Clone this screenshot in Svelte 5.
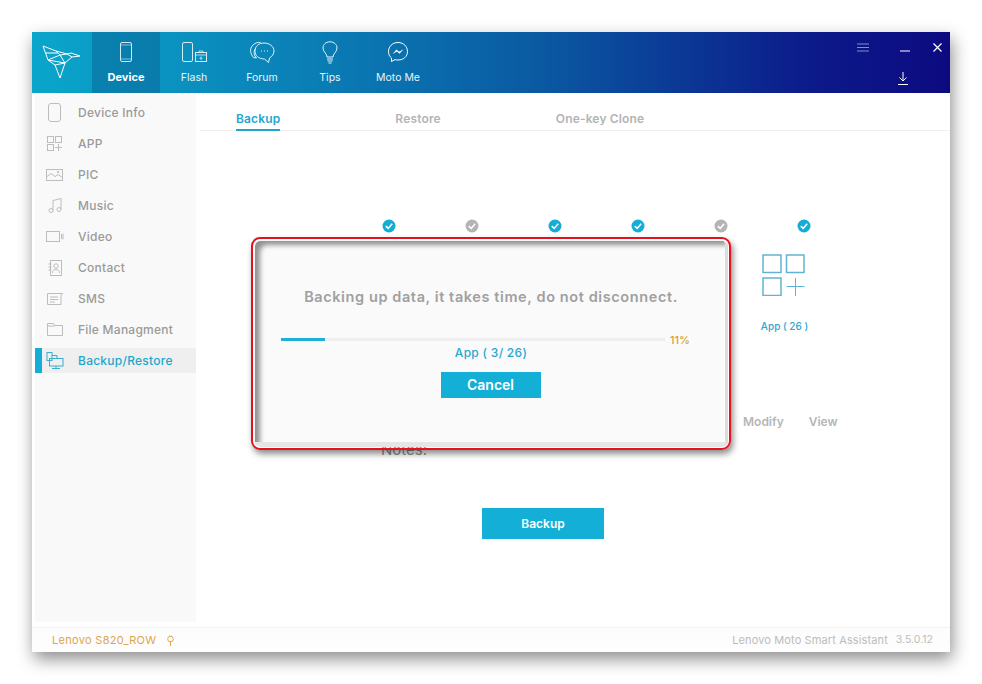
<script lang="ts">
	const nav = [
		{ label: 'Device', active: true },
		{ label: 'Flash' },
		{ label: 'Forum' },
		{ label: 'Tips' },
		{ label: 'Moto Me' }
	];
	const side = ['Device Info', 'APP', 'PIC', 'Music', 'Video', 'Contact', 'SMS', 'File Managment', 'Backup/Restore'];
	const tabs = ['Backup', 'Restore', 'One-key Clone'];
	const steps = [true, false, true, true, false, true];
	const percent = 11;
</script>

<div class="window">
	<header class="topbar">
		<div class="logo">
			<svg width="60" height="61" viewBox="-4 -4 60 61" fill="none" stroke="#fff" stroke-width="1" stroke-linejoin="round">
				<path d="M7 10L20 15L31 18L35 17L44 20L36 21L29 27L24 42L19 29L29 27M7 10L12 24L19 29M12 24L24 19L20 15M24 19L29 27M12 24L29 27M36 21L31 18L24 19M10 17L22 17"/>
			</svg>
		</div>
		{#each nav as item, i}
			<div class="nav-item" class:active={item.active}>
				<span class="nav-icon">
					{#if i === 0}
						<svg width="12" height="20" viewBox="0 0 12 20" fill="none" stroke="#cfeaf4"><rect x=".5" y=".5" width="11" height="19" rx="1.500"/><path d="M.5 3h11M.5 17h11" opacity=".6"/></svg>
					{:else if i === 1}
						<svg width="25" height="20" viewBox="0 0 25 20" fill="none" stroke="#d5eef6"><rect x=".5" y=".5" width="10" height="19" rx="1.500"/><rect x="13.500" y="10.500" width="11" height="9"/><path d="M13.500 13h11M19 14.500v3.500M17.500 16.200h3M17 10.500V9h4v1.500" stroke-width=".8"/></svg>
					{:else if i === 2}
						<svg width="26" height="22" viewBox="0 0 26 22" fill="none" stroke="#e2f3f8"><path d="M15 2C20.500 2 25 5.500 25 10C25 13 23 15.500 20.500 17L19.500 21.500L15.500 18C9.500 18 6 14.500 6 10C6 5.500 9.500 2 15 2Z"/><path d="M6.500 7.500C4 11 5 14.500 7.500 17L4.500 16.500C1.500 13 0 8 4 4C6 2 9 1 11.500 1.500"/><path d="M12 10h1M15 10h1M18 10h1" stroke-width="1.200"/></svg>
					{:else if i === 3}
						<svg width="16" height="23" viewBox="0 0 16 23" fill="none" stroke="#e8f5f9"><path d="M5 16C5 12.500 1 11 1 7C1 3.500 4 .8 8 .8C12 .8 15 3.500 15 7C15 11 11 12.500 11 16Z"/><path d="M5 18h6M5.500 20h5M6.500 22h3" stroke-width="1.200"/></svg>
					{:else}
						<svg width="22" height="22" viewBox="0 0 22 22" fill="none" stroke="#fff"><path d="M11 1.500C16.500 1.500 20.500 5.500 20.500 10.500C20.500 15.500 16.500 19 11 19C10 19 9 18.900 8 18.600L4.500 20.500V17C2.500 15.500 1.500 13.200 1.500 10.500C1.500 5.500 5.500 1.500 11 1.500Z"/><path d="M5.500 13L9.500 8.500L12 10.800L16.500 8.200L12.500 12.800L10 10.500Z" fill="#fff" stroke="none"/></svg>
					{/if}
				</span>
				<span class="nav-label">{item.label}</span>
			</div>
		{/each}

		<div class="win-controls">
			<div class="win-row">
				<svg class="menu-ico" width="12" height="11" viewBox="0 0 12 11" stroke="#7f8fd0"><path d="M0 2h12M0 5.500h12M0 9h12"/></svg>
				<svg class="min-ico" width="10" height="10" viewBox="0 0 10 10" stroke="#fff"><path d="M0 9h10"/></svg>
				<svg class="close-ico" width="9" height="9" viewBox="0 0 9 9" stroke="#fff" stroke-width="1.200"><path d="M.5 .5l8 8M8.500 .5l-8 8"/></svg>
			</div>
			<svg class="dl-ico" width="10" height="13" viewBox="0 0 10 13" fill="none" stroke="#fff"><path d="M5 0v9M1.500 5.500L5 9l3.500-3.500M0 12.500h10"/></svg>
		</div>
	</header>

	<div class="body">
		<aside class="sidebar">
			{#each side as name, i}
				<div class="side-item" class:current={i === 8}>
					<span class="side-icon">
						{#if i === 0}
							<svg width="13" height="19" viewBox="0 0 13 19" fill="none"><rect x=".5" y=".5" width="12" height="18" rx="2.500"/></svg>
						{:else if i === 1}
							<svg width="15" height="15" viewBox="0 0 15 15" fill="none"><rect x=".5" y=".5" width="6" height="6"/><rect x="8.500" y=".5" width="6" height="6"/><rect x=".5" y="8.500" width="6" height="6"/><path d="M8 11.500h7M11.500 8v7"/></svg>
						{:else if i === 2}
							<svg width="17" height="12" viewBox="0 0 17 12" fill="none"><rect x=".5" y=".5" width="16" height="11"/><path d="M.5 8L5 4.500L9 7.500L12 5.500L16.500 8.500"/><circle cx="12" cy="3" r=".8"/></svg>
						{:else if i === 3}
							<svg width="14" height="15" viewBox="0 0 14 15" fill="none"><path d="M5 12.500V2.500L13 .5V11"/><circle cx="3" cy="12.500" r="2"/><circle cx="11" cy="11.500" r="2"/></svg>
						{:else if i === 4}
							<svg width="18" height="11" viewBox="0 0 18 11" fill="none"><rect x=".5" y=".5" width="13" height="10"/><path d="M15.500 3v5M17 2.500v6"/></svg>
						{:else if i === 5}
							<svg width="14" height="16" viewBox="0 0 14 16" fill="none"><rect x="2.500" y=".5" width="11" height="15"/><circle cx="8" cy="6" r="2.200"/><path d="M4.500 13c0-2.500 1.500-3.500 3.500-3.500s3.500 1 3.500 3.500M.5 4h3M.5 7h3M.5 10h3"/></svg>
						{:else if i === 6}
							<svg width="16" height="12" viewBox="0 0 16 12" fill="none"><path d="M.5 .5h15l-1.500 2v9H.5Z"/><path d="M3 4h8M3 6.500h8M3 9h5"/></svg>
						{:else if i === 7}
							<svg width="16" height="13" viewBox="0 0 16 13" fill="none"><path d="M.5 12.500V.5h6l1.500 2h7.500v10Z"/><path d="M.5 3h7.500"/></svg>
						{:else}
							<svg width="18" height="17" viewBox="0 0 18 17" fill="none"><rect x="1" y=".5" width="5" height="8"/><rect x="3.500" y="6.500" width="13.500" height="7.500"/><path d="M6 16.500h8M10 14v2.500M6 3.500h5v3"/></svg>
						{/if}
					</span>
					<span>{name}</span>
				</div>
			{/each}
		</aside>

		<main class="main">
			<nav class="tabs">
				{#each tabs as tab, i}
					<span class="tab" class:on={i === 0}>{tab}</span>
				{/each}
			</nav>

			<div class="steps">
				{#each steps as ok, i}
					<div class="step">
						<svg width="14" height="14" viewBox="0 0 14 14">
							<circle cx="7" cy="7" r="6.500" fill={ok ? '#14add5' : '#b4b4b4'}/>
							<path d="M3.800 7.200L6.200 9.400L10.200 4.800" fill="none" stroke="#fff" stroke-width="1.600"/>
						</svg>
						{#if i === 5}
							<svg class="app-ico" width="43" height="42" viewBox="0 0 43 42" fill="none" stroke="#62b3d3" stroke-width="1.500">
								<rect x="1" y="1" width="18" height="17.500"/>
								<rect x="24.500" y="1" width="17.500" height="17.500"/>
								<rect x="1" y="24" width="18" height="17.500"/>
								<path d="M24.500 32.500h18M33.500 24v18" stroke-width="1"/>
							</svg>
							<span class="step-label">App ( 26 )</span>
						{/if}
					</div>
				{/each}
			</div>

			<div class="links">
				<span>Modify</span>
				<span>View</span>
			</div>

			<p class="notes">Notes:</p>

			<button class="backup-btn">Backup</button>
		</main>

		<div class="dialog">
			<div class="dialog-inner">
				<p class="dialog-msg">Backing up data, it takes time, do not disconnect.</p>
				<div class="progress">
					<div class="track"><div class="fill" style="width: {percent}.5%"></div></div>
					<span class="pct">{percent}%</span>
				</div>
				<div class="count">App ( 3/ 26)</div>
				<button class="cancel-btn">Cancel</button>
			</div>
		</div>
	</div>

	<footer class="footer">
		<div class="device">
			<span>Lenovo S820_ROW</span>
			<svg width="7" height="11" viewBox="0 0 7 11" fill="none" stroke="#dca64c"><rect x=".8" y="1.500" width="5.400" height="5" rx="2"/><path d="M2.500 .5v1M4.500 .5v1M3.500 6.500V11" /></svg>
		</div>
		<div class="about">
			<span class="product">Lenovo Moto Smart Assistant</span>
			<span>3.5.0.12</span>
		</div>
	</footer>
</div>

<style>
	:global(body) {
		margin: 0;
		background: #fff;
		font-family: Inter, "Open Sans", sans-serif;
	}

	.window {
		position: relative;
		width: 918px;
		height: 620px;
		margin: 32px 0 32px 32px;
		background: #fff;
		display: flex;
		flex-direction: column;
		box-shadow: 2px 7px 16px rgba(0, 0, 0, 0.45);
	}

	.topbar {
		height: 61px;
		flex: none;
		display: flex;
		background: linear-gradient(90deg, #0aa6cb 0%, #0a7fb6 30%, #0a5aa2 55%, #0c1a8a 85%, #0d0a80 100%);
	}

	.logo {
		width: 60px;
		display: flex;
		align-items: center;
		justify-content: center;
	}

	.nav-item {
		width: 68px;
		display: flex;
		flex-direction: column;
		align-items: center;
		color: #e6f4f9;
		font-size: 10.5px;
	}

	.nav-item.active {
		background: rgba(10, 90, 140, 0.42);
		color: #fff;
		font-weight: 700;
		font-size: 11px;
	}

	.nav-icon {
		height: 28px;
		margin-top: 6px;
		display: flex;
		align-items: center;
	}

	.nav-label {
		margin-top: 5px;
		line-height: 13px;
	}

	.win-controls {
		margin-left: auto;
		width: 94px;
		padding-top: 10px;
		box-sizing: border-box;
		display: flex;
		flex-direction: column;
		align-items: flex-start;
	}

	.win-row {
		display: flex;
		align-items: flex-start;
		height: 11px;
	}

	.menu-ico {
		margin-left: 1px;
	}

	.min-ico {
		margin-left: 31px;
	}

	.close-ico {
		margin: 1px 0 0 23px;
	}

	.dl-ico {
		margin: 19px 0 0 42px;
	}

	.body {
		position: relative;
		flex: 1;
		display: flex;
		min-height: 0;
	}

	.sidebar {
		width: 161px;
		margin: 2px 0 5px 3px;
		background: #f9f9f9;
		padding-top: 5px;
		box-sizing: border-box;
	}

	.side-item {
		height: 25px;
		margin-bottom: 6px;
		display: flex;
		align-items: center;
		padding-left: 7px;
		font-size: 12px;
		letter-spacing: 0.25px;
		font-weight: 500;
		color: #9a9a9a;
	}

	.side-item.current {
		border-left: 7px solid #14add5;
		padding-left: 0;
		background: #efefef;
		color: #1fa6cc;
	}

	.side-icon {
		width: 36px;
		display: flex;
		justify-content: center;
		padding-right: 11px;
		box-sizing: border-box;
		flex: none;
	}

	.side-icon svg {
		stroke: #bdbdbd;
	}

	.current .side-icon svg {
		stroke: #39aecf;
	}

	.main {
		flex: 1;
		min-width: 0;
		display: flex;
		flex-direction: column;
	}

	.tabs {
		margin: 0 0 0 3px;
		height: 37px;
		display: flex;
		padding-left: 37px;
		border-bottom: 1px solid #f0f0f0;
		font-size: 12px;
		letter-spacing: 0.15px;
		font-weight: 600;
		color: #b4b4b4;
	}

	.tab {
		display: flex;
		align-items: center;
		padding-top: 15px;
		margin-right: 115px;
		box-sizing: border-box;
		height: 38px;
		border-bottom: 2px solid transparent;
	}

	.tab.on {
		color: #1fa6cc;
		border-bottom-color: #1fa6cc;
	}

	.steps {
		margin: 88px 0 0 151px;
		display: grid;
		grid-template-columns: repeat(6, 83px);
		justify-items: center;
		height: 196px;
	}

	.step {
		display: flex;
		flex-direction: column;
		align-items: center;
	}

	.app-ico {
		margin: 21px 40px 0 0;
		display: block;
	}

	.step-label {
		margin: 24px 38px 0 0;
		font-size: 10px;
		font-weight: 500;
		color: #2ba6d0;
		white-space: nowrap;
	}

	.links {
		display: flex;
		gap: 25px;
		margin-left: 547px;
		font-size: 12px;
		font-weight: 600;
		color: #b6b6b6;
		line-height: 14px;
	}

	.notes {
		margin: 12px 0 0 185px;
		font-size: 15px;
		line-height: 17px;
		color: #8d8d8d;
	}

	.backup-btn {
		margin: 50px 0 0 286px;
		width: 122px;
		height: 31px;
		border: 0;
		background: #13afd6;
		color: #fff;
		font: 600 12px Inter, sans-serif;
	}

	/* progress dialog, the red frame is an annotation around it */
	.dialog {
		position: absolute;
		left: 219px;
		top: 144px;
		width: 480px;
		height: 213px;
		box-sizing: border-box;
		border: 2px solid #e8101c;
		border-radius: 9px;
		padding: 1.500px;
		box-shadow: 2px 4px 6px rgba(0, 0, 0, 0.45);
	}

	.dialog-inner {
		height: 100%;
		box-sizing: border-box;
		padding: 6px 0 0 7px;
		border-style: solid;
		border-width: 0 3px 5px 0;
		border-color: #dcdcdc #dcdcdc rgba(222, 222, 222, 0.75);
		border-radius: 5px;
		background: #fafafa;
		box-shadow: inset 7px 6px 5px -2px rgba(0, 0, 0, 0.42);
		display: flex;
		flex-direction: column;
		align-items: center;
	}

	.dialog-msg {
		margin: 42px 4px 0 0;
		font-size: 14.500px;
		letter-spacing: 0.6px;
		line-height: 16px;
		font-weight: 600;
		color: #a0a0a0;
	}

	.progress {
		margin: 28px 0 0 -15px;
		width: 409px;
		display: flex;
		align-items: center;
		gap: 5px;
	}

	.track {
		flex: 1;
		height: 3px;
		background: #eeeeee;
	}

	.fill {
		height: 100%;
		background: #1dafd6;
	}

	.pct {
		font-size: 11px;
		font-weight: 500;
		color: #dba02c;
	}

	.count {
		margin: -2px 4px 0 0;
		font-size: 12px;
		letter-spacing: 0.3px;
		font-weight: 500;
		color: #2ba6d0;
	}

	.cancel-btn {
		margin: 12px 0 0 -5px;
		width: 100px;
		height: 26px;
		border: 0;
		background: #13afd6;
		color: #fff;
		font: 600 14px Inter, sans-serif;
	}

	.footer {
		height: 25px;
		flex: none;
		display: flex;
		justify-content: space-between;
		align-items: center;
		padding: 0 17px 0 20px;
		background: #fdfdfd;
		border-top: 1px solid #f2f2f2;
		box-sizing: border-box;
		font-size: 10.5px;
	}

	.device {
		display: flex;
		align-items: center;
		gap: 11px;
		font-size: 11px;
		letter-spacing: 0.3px;
		color: #dca64c;
	}

	.about {
		display: flex;
		gap: 8px;
		color: #bcbcbc;
	}

	.product {
		font-size: 11px;
		letter-spacing: 0.12px;
	}
</style>
